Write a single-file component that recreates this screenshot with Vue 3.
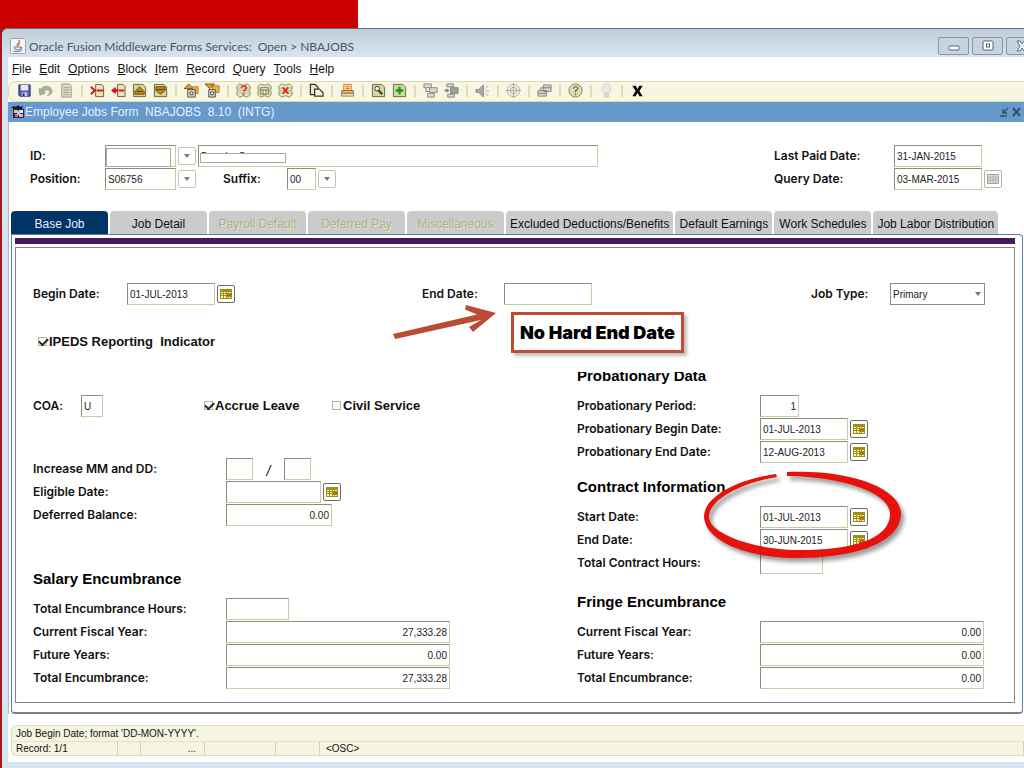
<script setup>
import { ref } from 'vue'

const menus = ['File', 'Edit', 'Options', 'Block', 'Item', 'Record', 'Query', 'Tools', 'Help']

const page = '<path d="M1.500 1.500h10l3 3v10h-13z" fill="#d3d6a0" stroke="#66683c"/>'
const db =
  '<path d="M1 3.500l3-2.500 4 1.500L12 1l3 2.500v3L14 8l1 1.500v3L12 15l-4-1.500L4 15l-3-2.500v-3L2 8 1 6.500z" fill="#e6e8c4" stroke="#85885c"/><path d="M2 5.500h12M2 8h12M2 10.500h12" stroke="#a4a67c" stroke-width=".8"/>'
const icons = {
  save: '<path d="M2 2h12v12H3l-1-1z" fill="#5a5aa8" stroke="#26265e"/><path d="M4 2h8v6H4z" fill="#e4e8f8"/><path d="M5 10h6v4H5z" fill="#c8cce4"/><path d="M6 11h2v3H6z" fill="#26265e"/>',
  undo: '<path d="M1 6l1 7 6-2-2-1.500q4-4 6-1q1 3-2 5q5-1 5-5q-1-6-8-5q-2 .5-4 3z" fill="#a9b48f" stroke="#8b9673" stroke-width=".6"/>',
  doc: '<path d="M3 1h8l2 2v12H3z" fill="#dcdccb" stroke="#9a9a8a"/><path d="M5 5h6M5 7.500h6M5 10h6M5 12.500h6" stroke="#9a9a8a"/>',
  insert: '<path d="M6 1.500h6l2.500 2v11H6z" fill="#e8e2b8" stroke="#7a5a3a"/><path d="M7 8h7" stroke="#d01818" stroke-width="2"/><path d="M1 4l4 4-4 4" fill="none" stroke="#e01010" stroke-width="2"/>',
  remove: '<path d="M7 1.500h6l2 2v11H7z" fill="#e8e2b8" stroke="#7a5a3a"/><path d="M8 8h6" stroke="#d01818" stroke-width="2"/><path d="M0 8l5-4v2.500h2v3H5V12z" fill="#e01010"/>',
  prev: page + '<path d="M3 9l5-5 5 5v3H3z" fill="#c8860c" stroke="#4e3a10" stroke-width=".8"/><path d="M5 9h6" stroke="#4e3a10"/>',
  next: page + '<path d="M3 4h10v4l-5 4-5-4z" fill="#c8860c" stroke="#4e3a10" stroke-width=".8"/><path d="M4 7h8" stroke="#4e3a10"/>',
  prevb: '<path d="M0 6l5-5 5 5z" fill="#f09820" stroke="#5c3c10" stroke-width=".8"/><path d="M9 4h6v7H9z" fill="#f4b044" stroke="#b07820"/><path d="M4 7h8v8H4z" fill="#d8dcc0" stroke="#4c5040"/><path d="M6.500 9.500h3v3h-3z" fill="#fff" stroke="#4c5040"/>',
  nextb: '<path d="M8 3h7v7H8z" fill="#f4b044" stroke="#b07820"/><path d="M0 1h10L5 6z" fill="#f09820" stroke="#5c3c10" stroke-width=".8"/><path d="M4 7h7v8H4z" fill="#d8dcc0" stroke="#4c5040"/><path d="M6 9.500h3v3H6z" fill="#fff" stroke="#4c5040"/>',
  enter: db + '<path d="M5.500 5q1-2 3-2q4 1 1.500 4l-2 2M8 11v2" fill="none" stroke="#e03030" stroke-width="1.800"/>',
  exec: db + '<path d="M4 5h8v7H4zM4 7.500h8M6.500 7v5M9.500 7v5" fill="#f4f4dc" stroke="#66683c" stroke-width=".9"/>',
  cancel: db + '<path d="M5 4.500l6 7M11 4.500l-6 7" stroke="#e81818" stroke-width="1.800"/>',
  copy: '<path d="M1.500 1.500h5l3 3v8h-8z" fill="#e8e8c0" stroke="#33352a" stroke-width="1.300"/><path d="M6 6.500h5l4 4V14H6z" fill="#f8f8e0" stroke="#33352a" stroke-width="1.300"/>',
  print: '<path d="M4 1.500h8V8H4z" fill="#fbdcae" stroke="#c88030"/><path d="M6 4h4M6 6h4" stroke="#d06a20"/><path d="M2 8h12v3H2z" fill="#f8b850" stroke="#8a6a40"/><path d="M1.500 11h13v3h-13z" fill="#e8e0c8" stroke="#7a6a50" stroke-width=".8"/>',
  find: page + '<circle cx="6.500" cy="6" r="2.500" fill="#f8f8e0" stroke="#33352a"/><path d="M8 8l4 4" stroke="#33352a" stroke-width="2"/>',
  add: page + '<path d="M8 4v8M4 8h8" stroke="#0aa014" stroke-width="2.500"/>',
  tree1: '<path d="M1 1h8v4H1zM7 5h8v5H7zM5 11h7v4H5zM3 5v4h4" fill="#d8d8d0" stroke="#8a8a84"/>',
  tree2: '<path d="M3 1h7v3H3zM4 12h7v3H4z" fill="#e0e0da" stroke="#80807c"/><path d="M7 5h8v6H7z" fill="#a0a09c" stroke="#80807c"/><path d="M0 8h3" stroke="#80807c"/><path d="M2 5.500L6 8l-4 2.500z" fill="#80807c"/>',
  sound: '<path d="M1 7h3l5-5v13L4 10H1z" fill="#a8aaa8" stroke="#8a8c8a"/><path d="M11 6l3-3M11 8.500h4M11 11l3 3" stroke="#a8aaa8"/>',
  target: '<circle cx="8" cy="8" r="6.500" fill="none" stroke="#a4a69e"/><circle cx="8" cy="8" r="3.500" fill="none" stroke="#a4a69e"/><path d="M8 0v16M0 8h16" stroke="#a4a69e"/>',
  windows: '<path d="M7 2h8v7H7zM1 8h9v6H1zM7 5h8M1 11h9M4 8V5h3" fill="#d4d4cc" stroke="#85857f"/>',
  help: '<circle cx="8" cy="8" r="7" fill="#dcdfb8" stroke="#808460"/><path d="M5.500 6q2.500-4 5-.5q0 1.500-2.500 3v1.500M8 11.500v1.500" fill="none" stroke="#70744e" stroke-width="1.500"/>',
  bulb: '<circle cx="8" cy="6" r="5" fill="#e8e8e6" stroke="#d4d4ce"/><path d="M6 11h4v4H6z" fill="#dcdcd8" stroke="#ccccc6"/>',
  exit: '<path d="M2.500 3h3.500l2 3.500L10 3h3.500l-3.500 5.500 3.500 5.500H10l-2-3.500L6 14H2.500L6 8.500z" fill="#050505"/>',
}
const toolGroups = [
  ['save', 'undo', 'doc'],
  ['insert', 'remove', 'prev', 'next'],
  ['prevb', 'nextb'],
  ['enter', 'exec', 'cancel'],
  ['copy'],
  ['print'],
  ['find', 'add'],
  ['tree1', 'tree2'],
  ['sound'],
  ['target'],
  ['windows'],
  ['help'],
  ['bulb'],
  ['exit'],
]

const calendar =
  '<path d="M0 0h12v10H0z" fill="#98921c"/><path d="M1 3h2v1H1zM4 3h2v1H4zM7 3h1v1H7zM9 3h2v1H9zM1 5h2v1H1zM4 5h2v1H4zM1 7h2v2H1zM4 7h2v2H4z" fill="#fff8a0"/><path d="M7 5h1v2H7zM9 5h2v2H9z" fill="#e04828"/><path d="M7 8h1v1H7zM9 8h2v1H9z" fill="#fff8a0"/>'
const calendarOff =
  '<path d="M.5.5h11v9H.5z" fill="#e4e4e0" stroke="#a0a09c"/><path d="M1 3h10M1 5h10M1 7h10M3.500 1v8M6 1v8M8.500 1v8" stroke="#a8a8a4" stroke-width=".7"/>'

const tabs = [
  { name: 'Base Job', state: 'active' },
  { name: 'Job Detail' },
  { name: 'Payroll Default', state: 'off' },
  { name: 'Deferred Pay', state: 'off' },
  { name: 'Miscellaneous', state: 'off' },
  { name: 'Excluded Deductions/Benefits' },
  { name: 'Default Earnings' },
  { name: 'Work Schedules' },
  { name: 'Job Labor Distribution' },
]

const ipeds = ref(true)
const accrue = ref(true)
const civil = ref(false)

const salary = [
  { id: 'sal-cur', label: 'Current Fiscal Year:', value: '27,333.28' },
  { id: 'sal-fut', label: 'Future Years:', value: '0.00' },
  { id: 'sal-tot', label: 'Total Encumbrance:', value: '27,333.28' },
]
const fringe = [
  { id: 'fr-cur', label: 'Current Fiscal Year:', value: '0.00' },
  { id: 'fr-fut', label: 'Future Years:', value: '0.00' },
  { id: 'fr-tot', label: 'Total Encumbrance:', value: '0.00' },
]
const probation = [
  { id: 'pr-beg', label: 'Probationary Begin Date:', value: '01-JUL-2013' },
  { id: 'pr-end', label: 'Probationary End Date:', value: '12-AUG-2013' },
]
const contract = [
  { id: 'ct-beg', label: 'Start Date:', value: '01-JUL-2013' },
  { id: 'ct-end', label: 'End Date:', value: '30-JUN-2015' },
]
</script>

<template>
  <div class="slide">
    <div class="banner"></div>
    <div class="window">
      <header class="titlebar">
        <svg class="java" viewBox="0 0 16 16">
          <rect x=".5" y=".5" width="15" height="15" rx="1" fill="#f6f6f6" stroke="#9aa4ae" />
          <path d="M8 2q3 1 0 3.500q-1.500 1.500 0 3M10 4.500q-2 1.500-1 3" fill="none" stroke="#e07030" stroke-width="1.200" />
          <path d="M4 9h7v2q-3 2-6 0zM11 9q2 0 0 2M3 13q5 1.500 9-.5" fill="none" stroke="#5a7ca0" />
        </svg>
        <h1>Oracle Fusion Middleware Forms Services:&nbsp; Open &gt; NBAJOBS</h1>
        <div class="winbtns">
          <button aria-label="Minimize"><svg viewBox="0 0 12 12"><rect x="1" y="6" width="10" height="4" rx="1" fill="#fff" stroke="#5c6670" /></svg></button>
          <button aria-label="Maximize"><svg viewBox="0 0 12 12"><rect x="1" y="1" width="10" height="9" rx="1" fill="#fff" stroke="#5c6670" /><rect x="4.500" y="4" width="3" height="3" fill="#fff" stroke="#5c6670" /></svg></button>
          <button aria-label="Close"><svg viewBox="0 0 12 12"><path d="M1 1h3l2 3 2-3h3L8 6l3 5H8L6 8l-2 3H1l3-5z" fill="#fff" stroke="#5c6670" /></svg></button>
        </div>
      </header>

      <div class="client">
        <nav class="menubar">
          <button v-for="m in menus" :key="m"><u>{{ m[0] }}</u>{{ m.slice(1) }}</button>
        </nav>

        <div class="toolbar">
          <div v-for="(g, i) in toolGroups" :key="i" class="tgroup">
            <button v-for="n in g" :key="n" :aria-label="n">
              <svg viewBox="0 0 16 16" v-html="icons[n]"></svg>
            </button>
          </div>
        </div>

        <div class="formtitle">
          <svg viewBox="0 0 14 14">
            <path d="M2 4h11v9H2z" fill="#20205a" />
            <path d="M0 3l3-2 2 1 2-2 2 2 3-1-1 3H4z" fill="#181828" />
            <path d="M3 5h4v3H3z" fill="#f4d040" /><path d="M8 5h4v3H8z" fill="#e8e8f8" />
            <path d="M4 9h3v3H4z" fill="#e060a0" /><path d="M8 9h4v3H8z" fill="#f0c070" /><path d="M6 6h3v4H6z" fill="#b0c8ff" />
          </svg>
          <h2>Employee Jobs Form&nbsp; NBAJOBS&nbsp; 8.10&nbsp; (INTG)</h2>
          <button aria-label="Restore"><svg viewBox="0 0 10 10"><path d="M9 1L4 6M4 2v4h4M1 9h7" fill="none" stroke="#3c4c60" stroke-width="1.300" /></svg></button>
          <button aria-label="Close form"><svg viewBox="0 0 10 10"><path d="M1 1l7 8M8 1L1 9" stroke="#3c4c60" stroke-width="2" /></svg></button>
        </div>

        <main>
          <section class="keyblock">
            <div>
              <div class="row">
                <label for="id" class="w75">ID:</label>
                <span class="masked idmask"><input id="id" class="w71" /></span>
                <button class="lov" aria-label="List IDs"></button>
                <span class="masked namemask"><input class="w400" aria-label="Name" value="Brandy  C" /></span>
              </div>
              <div class="row">
                <label for="pos" class="w75">Position:</label>
                <input id="pos" class="w71" value="S06756" />
                <button class="lov" aria-label="List positions"></button>
                <label for="suf" class="suffix">Suffix:</label>
                <input id="suf" class="w29" value="00" />
                <button class="lov" aria-label="List suffixes"></button>
              </div>
            </div>
            <div>
              <div class="row">
                <label for="paid" class="w120">Last Paid Date:</label>
                <input id="paid" class="w88" value="31-JAN-2015" />
              </div>
              <div class="row">
                <label for="query" class="w120">Query Date:</label>
                <input id="query" class="w88" value="03-MAR-2015" />
                <button class="cal dim" aria-label="Pick date"><svg viewBox="0 0 12 10" v-html="calendarOff"></svg></button>
              </div>
            </div>
          </section>

          <div class="tabs" role="tablist">
            <button v-for="t in tabs" :key="t.name" role="tab" :class="t.state">{{ t.name }}</button>
          </div>

          <div class="panel">
            <div class="stripe"></div>
            <div class="frame">
              <div class="toprow">
                <div class="row">
                  <label for="beg" class="w94">Begin Date:</label>
                  <input id="beg" class="w88" value="01-JUL-2013" />
                  <button class="cal" aria-label="Pick date"><svg viewBox="0 0 12 10" v-html="calendar"></svg></button>
                </div>
                <div class="row anchor">
                  <label for="end" class="w82">End Date:</label>
                  <input id="end" class="w88" />
                  <svg class="arrow" viewBox="0 0 108 40">
                    <path d="M3 32L87 12.500 75 7.500 76 3 106 11 83 30 79 25 91 18 5 37z" fill="#bb4a36" />
                  </svg>
                  <div class="callout">No Hard End Date</div>
                </div>
                <div class="row">
                  <label for="type" class="w79">Job Type:</label>
                  <span class="selectbox"><select id="type"><option>Primary</option></select></span>
                </div>
              </div>

              <div class="cols">
                <div>
                  <div class="row check inset">
                    <input id="ipeds" v-model="ipeds" type="checkbox" /><label for="ipeds">IPEDS Reporting&nbsp; Indicator</label>
                  </div>
                  <div class="row coa">
                    <label for="coa" class="w48">COA:</label>
                    <input id="coa" class="w22" value="U" />
                    <div class="row check c1"><input id="acc" v-model="accrue" type="checkbox" /><label for="acc">Accrue Leave</label></div>
                    <div class="row check c2"><input id="civ" v-model="civil" type="checkbox" /><label for="civ">Civil Service</label></div>
                  </div>
                  <div class="increase">
                    <div class="row">
                      <label for="mm" class="w193">Increase MM and DD:</label>
                      <input id="mm" class="w27" /><span class="slash">/</span><input class="w27" aria-label="DD" />
                    </div>
                    <div class="row">
                      <label for="elig" class="w193">Eligible Date:</label>
                      <input id="elig" class="w95" />
                      <button class="cal" aria-label="Pick date"><svg viewBox="0 0 12 10" v-html="calendar"></svg></button>
                    </div>
                    <div class="row">
                      <label for="def" class="w193">Deferred Balance:</label>
                      <input id="def" class="w106 num" value="0.00" />
                    </div>
                  </div>
                  <section class="salary">
                    <h3>Salary Encumbrance</h3>
                    <div class="row">
                      <label for="hrs" class="w193">Total Encumbrance Hours:</label>
                      <input id="hrs" class="w63" />
                    </div>
                    <div v-for="r in salary" :key="r.id" class="row">
                      <label :for="r.id" class="w193">{{ r.label }}</label>
                      <input :id="r.id" class="w224 num" :value="r.value" />
                    </div>
                  </section>
                </div>

                <div class="right">
                  <section>
                    <h3 class="cut">Probationary Data</h3>
                    <div class="row">
                      <label for="per" class="w183">Probationary Period:</label>
                      <input id="per" class="w39 num" value="1" />
                    </div>
                    <div v-for="r in probation" :key="r.id" class="row">
                      <label :for="r.id" class="w183">{{ r.label }}</label>
                      <input :id="r.id" class="w88" :value="r.value" />
                      <button class="cal" aria-label="Pick date"><svg viewBox="0 0 12 10" v-html="calendar"></svg></button>
                    </div>
                  </section>
                  <section class="contract anchor">
                    <h3>Contract Information</h3>
                    <div v-for="r in contract" :key="r.id" class="row">
                      <label :for="r.id" class="w183">{{ r.label }}</label>
                      <input :id="r.id" class="w88" :value="r.value" />
                      <button class="cal" aria-label="Pick date"><svg viewBox="0 0 12 10" v-html="calendar"></svg></button>
                    </div>
                    <div class="row">
                      <label for="tch" class="w183">Total Contract Hours:</label>
                      <input id="tch" class="w63" />
                    </div>
                    <svg class="ring" viewBox="0 0 210 100">
                      <path
                        d="M87 6C150 3 200 22 201 47C201 79 150 92 97 92C45 92 4 74 4 50C5 31 35 14 76 8L77 11C40 17 9 34 9 51C9 68 55 84 100 84C150 84 190 74 190 48C190 27 145 11 87 10Z"
                        fill="#e8120c"
                      />
                    </svg>
                  </section>
                  <section class="fringe">
                    <h3>Fringe Encumbrance</h3>
                    <div v-for="r in fringe" :key="r.id" class="row">
                      <label :for="r.id" class="w183">{{ r.label }}</label>
                      <input :id="r.id" class="w224 num" :value="r.value" />
                    </div>
                  </section>
                </div>
              </div>
            </div>
          </div>
        </main>

        <footer class="status">
          <div class="hint">Job Begin Date; format 'DD-MON-YYYY'.</div>
          <div class="cells">
            <span class="s1">Record: 1/1</span><span class="s2"></span><span class="s3">...</span>
            <span class="s4"></span><span class="s5"></span><span class="s6">&lt;OSC&gt;</span>
          </div>
        </footer>
      </div>
    </div>
  </div>
</template>

<style>
body {
  margin: 0;
  background: #fff;
}
</style>

<style scoped>
* {
  box-sizing: border-box;
}
.slide {
  min-height: 100vh;
  display: flex;
  flex-direction: column;
  overflow: hidden;
  background: linear-gradient(90deg, #a3171c 0 6px, #fff 6px);
  font-family: 'Liberation Sans', Arial, sans-serif;
  color: #111;
}
.banner {
  height: 28px;
  background: linear-gradient(90deg, #cc0000 0 35%, #fff 35%);
}
.window {
  flex: 1;
  display: flex;
  flex-direction: column;
  margin-left: 2px;
  padding: 0 0 6px 6px;
  background: #d6e4f0;
  border-top: 1px solid #5f6b78;
  border-bottom: 1px solid #5a6068;
  border-top-left-radius: 6px;
}
button {
  padding: 0;
  border: 0;
  background: none;
  font: inherit;
  color: inherit;
}
svg {
  display: block;
}
h1,
h2,
h3 {
  margin: 0;
}
.titlebar {
  display: flex;
  align-items: center;
  height: 28px;
  margin-left: -6px;
  padding: 6px 0 0 8px;
  border-top-left-radius: 6px;
  background: linear-gradient(#c0ccd8, #d8e4ef);
}
.java {
  width: 16px;
  height: 16px;
}
.titlebar h1 {
  margin-left: 3px;
  flex: 1;
  font: 12px Lato, 'Open Sans', sans-serif;
  color: #4c565f;
}
.winbtns {
  display: flex;
  gap: 3px;
  margin-right: -13px;
}
.winbtns button {
  display: grid;
  place-items: center;
  width: 31px;
  height: 18px;
  border: 1px solid #8997a6;
  border-radius: 2px;
  background: #c6d3e0;
}
.winbtns svg {
  width: 12px;
  height: 12px;
}
.client {
  flex: 1;
  display: flex;
  flex-direction: column;
  background: #fff;
}
.menubar {
  display: flex;
  gap: 8px;
  height: 24px;
  padding-left: 4px;
  font-size: 12px;
}
.toolbar {
  display: flex;
  align-items: center;
  height: 21px;
  padding: 0 0 2px 5px;
  border: 1px solid #dcdcb4;
  border-right: 0;
  border-radius: 8px 0 0 8px;
  background: #f6f6e2;
}
.tgroup {
  display: flex;
}
.tgroup + .tgroup::before {
  content: '';
  width: 2px;
  height: 12px;
  margin: 3px 4px;
  background: #dcdcb8;
}
.tgroup button {
  display: grid;
  place-items: center;
  width: 21px;
  height: 18px;
}
.tgroup svg {
  width: 15px;
  height: 15px;
}
.formtitle {
  display: flex;
  align-items: center;
  gap: 3px;
  height: 20px;
  padding: 0 2px 0 3px;
  background: #6699cc;
}
.formtitle > svg {
  width: 14px;
  height: 14px;
}
.formtitle h2 {
  flex: 1;
  margin-left: -3px;
  font-size: 12px;
  font-weight: 400;
  color: #e6f0fa;
}
.formtitle button svg {
  width: 10px;
  height: 10px;
}
main {
  padding: 22px 1px 0 2px;
  border-left: 1px solid #b4bca4;
}
.row {
  display: flex;
  align-items: center;
  height: 23px;
}
label {
  font: 600 12px/16px Inter, 'Liberation Sans', sans-serif;
  font-variant-ligatures: no-contextual;
  white-space: nowrap;
}
input:not([type]),
select {
  height: 22px;
  padding: 2px 2px 0;
  border: 1px solid;
  border-color: #8c8e7c #c9cba4 #c9cba4 #8c8e7c;
  border-radius: 0;
  background: #fff;
  font: 10px 'Liberation Sans', Arial, sans-serif;
  color: #222;
}
.num {
  text-align: right;
}
.w22 { width: 22px; }
.w27 { width: 27px; }
.w29 { width: 29px; }
.w39 { width: 39px; }
.w48 { width: 48px; }
.w63 { width: 63px; }
.w71 { width: 71px; }
.w75 { width: 75px; }
.w79 { width: 79px; }
.w82 { width: 82px; }
.w88 { width: 88px; }
.w94 { width: 94px; }
.w95 { width: 95px; }
.w106 { width: 106px; }
.w120 { width: 120px; }
.w183 { width: 183px; }
.w193 { width: 193px; }
.w224 { width: 224px; }
.w400 { width: 400px; }
.keyblock {
  display: flex;
  justify-content: space-between;
  padding: 0 21px 0 19px;
}
.masked {
  position: relative;
  display: flex;
}
.masked::after {
  content: '';
  position: absolute;
  border: 1px solid #aaa;
  background: #fff;
}
.idmask::after {
  left: 1px;
  top: 3px;
  width: 63px;
  height: 17px;
}
.namemask::after {
  left: 2px;
  top: 8px;
  width: 84px;
  height: 8px;
}
.namemask input {
  white-space: pre;
}
.lov {
  display: grid;
  place-items: center;
  width: 18px;
  height: 18px;
  margin: 0 2px;
  border: 1px solid #c4c6b0;
  border-radius: 2px;
}
.lov::after {
  content: '';
  border: 3px solid transparent;
  border-top: 4px solid #7c7c7c;
  border-bottom: 0;
}
.suffix {
  width: 64px;
  margin-left: 25px;
}
.cal {
  display: grid;
  place-items: center;
  width: 18px;
  height: 18px;
  margin-left: 2px;
  border: 1px solid #6c6c60;
  border-radius: 2px;
  background: #fff;
}
.cal.dim {
  border-color: #b4b4ac;
}
.cal svg {
  width: 12px;
  height: 10px;
}
.tabs {
  display: flex;
  gap: 2px;
  margin-top: 21px;
}
.tabs button {
  min-width: 97px;
  height: 23px;
  padding: 2px 4px 0;
  border-radius: 4px 4px 0 0;
  background: #cbcbcb;
  font-size: 12px;
  white-space: nowrap;
}
.tabs .active {
  background: #003366;
  color: #e8f0f8;
}
.tabs .off {
  color: #b0b284;
  text-shadow: 1px 1px 0 #e2e2d4;
}
.panel {
  padding: 3px 7px 9px 3px;
  border: 1px solid #5b84ad;
  border-bottom: 2px solid #7c7f88;
  border-radius: 0 4px 4px 4px;
}
.stripe {
  height: 6px;
  background: #46195e;
}
.frame {
  margin-top: 3px;
  padding: 34px 29px 13px 17px;
  border: 1px solid #85858a;
}
.toprow {
  display: grid;
  grid-template-columns: 1fr 1fr auto;
}
.anchor {
  position: relative;
}
.selectbox {
  position: relative;
  display: flex;
}
.selectbox::after {
  content: '';
  position: absolute;
  right: 4px;
  top: 9px;
  border: 3px solid transparent;
  border-top: 4px solid #77796a;
  border-bottom: 0;
  pointer-events: none;
}
select {
  appearance: none;
  width: 95px;
  border-color: #8c8e7c;
}
.arrow {
  position: absolute;
  left: -32px;
  top: 20px;
  width: 108px;
  height: 40px;
}
.callout {
  position: absolute;
  left: 89px;
  top: 30px;
  width: 173px;
  height: 41px;
  border: 3px solid #c04a38;
  background: #fff;
  box-shadow: 3px 3px 3px #8888;
  font: 900 18px/35px Inter, 'Liberation Sans', sans-serif;
  text-align: center;
  white-space: nowrap;
  color: #000;
}
.cols {
  display: grid;
  grid-template-columns: 544fr 408fr;
  margin-top: 25px;
}
.check label {
  font: 700 13px 'Liberation Sans', Arial, sans-serif;
}
.check input {
  position: relative;
  appearance: none;
  width: 9px;
  height: 9px;
  margin: 0 2px 0 0;
  border: 1px solid #b6b894;
  background: #fff;
}
.check input:checked::after {
  content: '';
  position: absolute;
  left: 0;
  top: 0;
  width: 7px;
  height: 4px;
  border: solid #222;
  border-width: 0 0 2px 2px;
  transform: rotate(-45deg);
}
.inset {
  padding-left: 5px;
}
.coa {
  margin-top: 41px;
}
.c1 {
  width: 128px;
  margin-left: 101px;
}
.increase {
  margin-top: 40px;
}
.slash {
  width: 31px;
  padding-top: 4px;
  font-size: 14px;
  font-style: italic;
  text-align: center;
}
h3 {
  height: 22px;
  margin-bottom: 7px;
  font-size: 15px;
  line-height: 22px;
  color: #000;
}
.salary {
  margin-top: 42px;
}
.right {
  padding-top: 35px;
}
.cut {
  position: relative;
}
.cut::before {
  content: '';
  position: absolute;
  inset: 0 0 auto;
  height: 7px;
  background: #fff;
}
.contract {
  margin-top: 13px;
}
.ring {
  position: absolute;
  left: 123px;
  top: -10px;
  width: 210px;
  height: 100px;
  overflow: visible;
  filter: drop-shadow(3px 4px 2px #0006);
  pointer-events: none;
}
.fringe {
  margin-top: 17px;
}
.status {
  margin: 11px 0 6px 3px;
  border: 1px solid #dcdcb8;
  border-right: 0;
  border-radius: 6px 0 0 6px;
  background: #f5f5e2;
  font-size: 10px;
}
.hint {
  height: 15px;
  padding-left: 4px;
  line-height: 16px;
}
.cells {
  display: flex;
  height: 14px;
  padding-left: 4px;
  border-top: 1px solid #e2e2c4;
  line-height: 14px;
}
.cells span {
  border-right: 1px solid #d4d4b4;
}
.s1 { width: 102px; }
.s2 { width: 23px; }
.s3 {
  width: 64px;
  padding-right: 8px;
  text-align: right;
}
.s4 { width: 71px; }
.s5 { width: 44px; }
.s6 {
  flex: 1;
  padding-left: 6px;
}
</style>
